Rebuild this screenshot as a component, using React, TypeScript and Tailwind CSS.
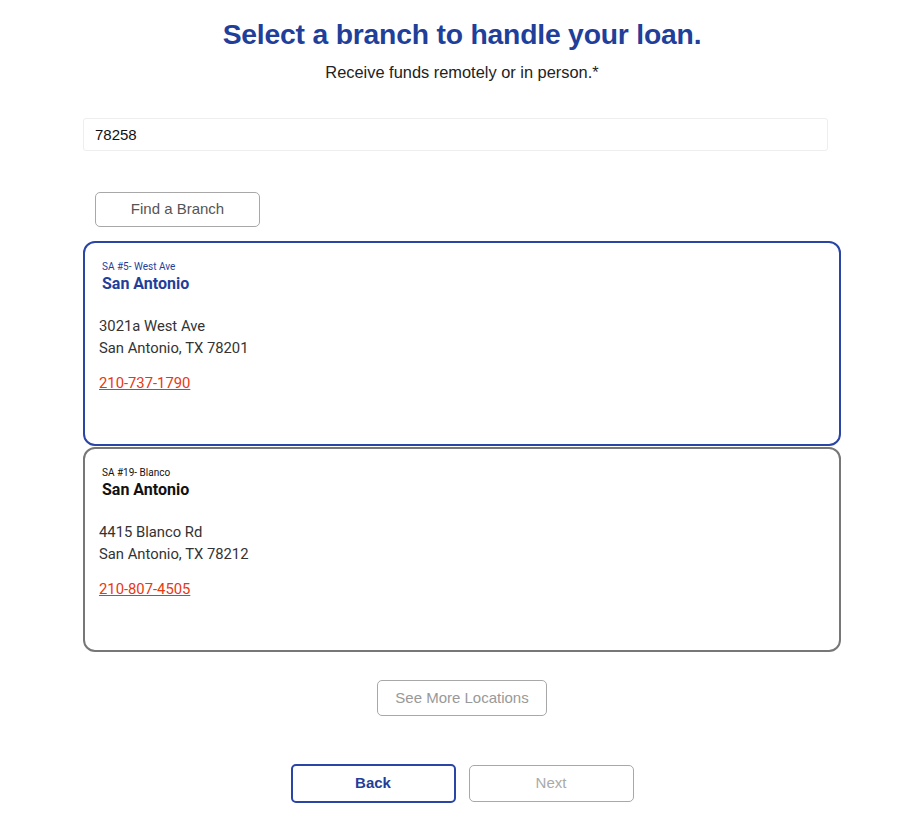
import React from 'react';

const BRANCHES = [
  {
    id: 5,
    code: 'SA #5- West Ave',
    city: 'San Antonio',
    street: '3021a West Ave',
    cityLine: 'San Antonio, TX 78201',
    phone: '210-737-1790',
    selected: true,
  },
  {
    id: 19,
    code: 'SA #19- Blanco',
    city: 'San Antonio',
    street: '4415 Blanco Rd',
    cityLine: 'San Antonio, TX 78212',
    phone: '210-807-4505',
    selected: false,
  },
];

export default function App() {
  return (
    <div className="min-h-[820px] bg-white font-['Liberation_Sans',Arial,sans-serif] overflow-hidden">
      <div className="w-[758px] mx-auto pt-[16px]">
        {/* heading */}
        <h1 className="text-center text-[28.3px] leading-[36px] font-bold text-[#1f3f9a] tracking-[-0.2px]">
          Select a branch to handle your loan.
        </h1>
        <p className="text-center text-[16.4px] leading-[20px] text-[#222] mt-[10px]">
          Receive funds remotely or in person.*
        </p>

        {/* zip search */}
        <input
          defaultValue="78258"
          className="mt-[36px] block w-[745px] h-[33px] px-[11px] border border-[#eeeeee] rounded-[3px] text-[15px] text-[#111] outline-none"
        />
        <button className="mt-[41px] ml-[12px] w-[165px] h-[35px] rounded-[5px] border border-[#a8a8a8] text-[15px] text-[#555] bg-white">
          Find a Branch
        </button>

        {/* branch cards */}
        <div className="mt-[14px] flex flex-col gap-[1px]">
          {BRANCHES.map((b) => (
            <div
              key={b.id}
              className={
                b.selected
                  ? 'h-[205px] rounded-[12px] border-2 border-[#2a45a3] px-[14px] pt-[18px]'
                  : 'h-[205px] rounded-[12px] border-2 border-[#777777] px-[14px] pt-[18px]'
              }
            >
              <div className={b.selected ? 'pl-[3px] text-[#1f3f9a]' : 'pl-[3px] text-[#111]'}>
                <div className="font-['Roboto',sans-serif] text-[10px] leading-[12px]">{b.code}</div>
                <div className="font-['Roboto',sans-serif] font-bold text-[16px] leading-[20px] mt-[1px]">{b.city}</div>
              </div>
              <div className="font-['Roboto',sans-serif] text-[14.8px] leading-[22px] text-[#333] mt-[21px]">
                <div>{b.street}</div>
                <div>{b.cityLine}</div>
              </div>
              <a
                href="#"
                className="inline-block font-['Roboto',sans-serif] text-[14.8px] leading-[22px] text-[#e8380f] underline mt-[13px]"
              >
                {b.phone}
              </a>
            </div>
          ))}
        </div>

        <div className="flex justify-center mt-[28px]">
          <button className="w-[170px] h-[36px] rounded-[5px] border border-[#a8a8a8] text-[15px] text-[#999] bg-white">
            See More Locations
          </button>
        </div>

        <div className="flex justify-center gap-[13px] mt-[48px]">
          <button className="w-[165px] h-[39px] rounded-[5px] border-2 border-[#2a45a3] text-[15px] font-bold text-[#1f3f9a] bg-white">
            Back
          </button>
          <button className="w-[165px] h-[37px] mt-[1px] rounded-[5px] border border-[#a8a8a8] text-[15px] text-[#aaa] bg-white">
            Next
          </button>
        </div>

        <p className="mt-[14px] text-center text-[11px] leading-[14px] text-[#ccc]">
          *Loan funds may be received remotely by direct deposit or in person at the selected branch location.
        </p>
      </div>
    </div>
  );
}
